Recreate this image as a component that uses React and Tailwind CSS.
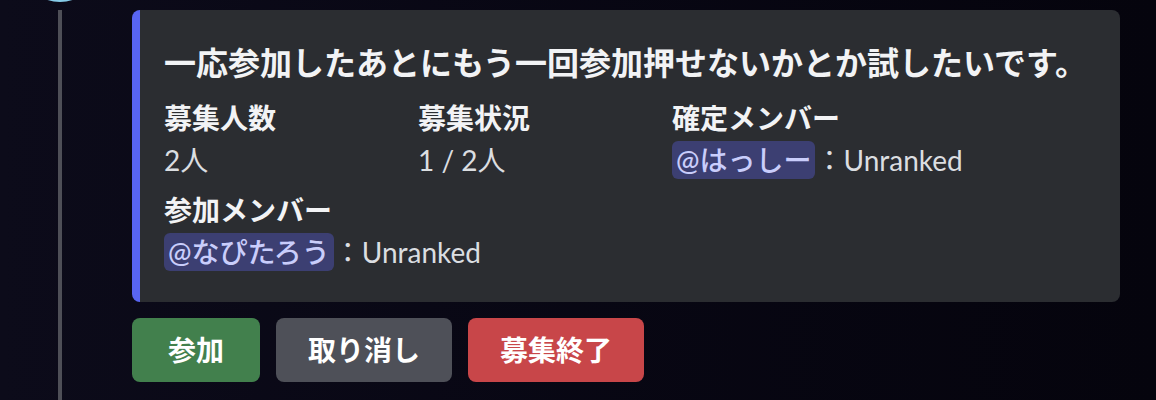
const font = { fontFamily: 'Lato, "Noto Sans CJK JP", sans-serif' };

const Mention = ({ children }) => (
  <span className="rounded-[6px] bg-[#3c3f72] px-[4px] py-[2px] font-medium text-[#c9cdfb]">
    {children}
  </span>
);

const Field = ({ name, children }) => (
  <div className="flex flex-col">
    <div className="whitespace-nowrap text-[28px] font-bold leading-[36px] text-[#f2f3f5]">{name}</div>
    <div className="mt-[2px] whitespace-nowrap text-[28px] leading-[44px] text-[#dbdee1]">{children}</div>
  </div>
);

const Btn = ({ children, className }) => (
  <button
    className={
      "flex h-[64px] items-center justify-center rounded-[8px] text-[28px] font-semibold text-white " +
      className
    }
  >
    {children}
  </button>
);

export default function App() {
  return (
    <div
      className="flex h-[400px] w-[1156px] overflow-hidden bg-gradient-to-r from-[#0c0b1a] to-[#05040d]"
      style={font}
    >
      {/* gutter: avatar edge + thread line */}
      <div className="flex w-[120px] shrink-0 flex-col items-center">
        <div className="mt-[-78px] h-[80px] w-[80px] shrink-0 rounded-full bg-[#86cbe8]" />
        <div className="mt-[8px] w-[4px] flex-1 bg-[#4e4f57]" />
      </div>

      <div className="ml-[12px] flex flex-col">
        <div className="mt-[10px] flex w-[988px] flex-col rounded-[8px] border-l-[8px] border-[#5865f2] bg-[#2b2d31] pb-[28px] pl-[24px] pr-[24px] pt-[33px]">
          <div className="whitespace-nowrap text-[32px] font-bold leading-[40px] text-[#f2f3f5]">
            一応参加したあとにもう一回参加押せないかとか試したいです。
          </div>
          <div className="mt-[17px] grid grid-cols-[238px_238px_238px] gap-x-[16px] gap-y-[10px]">
            <Field name="募集人数">2人</Field>
            <Field name="募集状況">1 / 2人</Field>
            <Field name="確定メンバー">
              <Mention>@はっしー</Mention>：Unranked
            </Field>
            <Field name="参加メンバー">
              <Mention>@なぴたろう</Mention>：Unranked
            </Field>
          </div>
        </div>

        <div className="mt-[16px] flex gap-[16px]">
          <Btn className="w-[128px] bg-[#42804d]">参加</Btn>
          <Btn className="w-[176px] bg-[#4e5058]">取り消し</Btn>
          <Btn className="w-[176px] bg-[#c84649]">募集終了</Btn>
        </div>
      </div>
    </div>
  );
}
